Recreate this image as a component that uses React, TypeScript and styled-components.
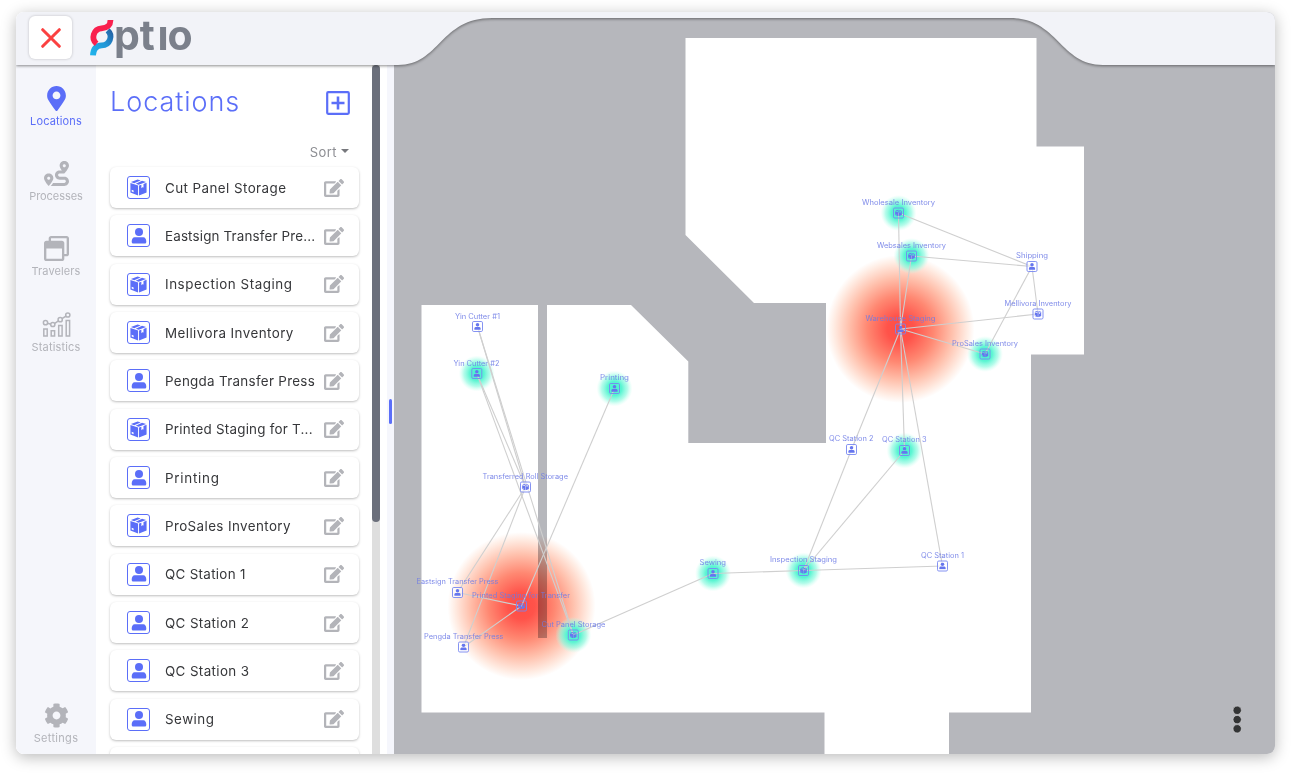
import React from "react";
import styled, { createGlobalStyle } from "styled-components";
import { FaMapMarkerAlt, FaRoute, FaRegWindowRestore, FaCog, FaEdit } from "react-icons/fa";

const GlobalStyle = createGlobalStyle`
  * { box-sizing: border-box; }
  body { margin: 0; background: #fff; font-family: Inter, "Open Sans", sans-serif; }
  button { font: inherit; border: 0; padding: 0; background: none; }
`;

const BLUE = "#5b6ef8";
const MUTED = "#b3b4ba";

const Page = styled.div`
  width: 1291px;
  height: 774px;
  padding: 12px 16px 20px;
  overflow: hidden;
`;

const Window = styled.div`
  position: relative;
  width: 1259px;
  height: 742px;
  padding-top: 53px;
  display: flex;
  border-radius: 8px;
  overflow: hidden;
  background: #fff;
`;

const Shadow = styled.div`
  border-radius: 8px;
  box-shadow: 0 3px 15px rgba(0, 0, 0, 0.28);
`;

/* The header floats over the map, so its curved edge can reveal it. */
const Header = styled.header`
  position: absolute;
  inset: 0 0 auto 0;
  height: 60px;
`;

const HeaderShape = styled.svg`
  display: block;
  filter: drop-shadow(0 1px 1.5px rgba(0, 0, 0, 0.45));
`;

const HeaderContent = styled.div`
  position: absolute;
  inset: 0;
  display: flex;
  align-items: flex-start;
  padding: 4px 0 0 13px;
  gap: 16px;
`;

const CloseButton = styled.button`
  width: 43px;
  height: 43px;
  display: grid;
  place-items: center;
  background: #fff;
  border-radius: 6px;
  box-shadow: 0 0 3px rgba(0, 0, 0, 0.22);
`;

const Nav = styled.nav`
  width: 80px;
  flex: none;
  display: flex;
  flex-direction: column;
  background: #f5f6fb;
  padding: 21px 0 9px;
  gap: 33.2px;
`;

const NavItem = styled.a<{ $active?: boolean; $last?: boolean }>`
  display: flex;
  flex-direction: column;
  align-items: center;
  gap: 3px;
  height: 42px;
  margin-top: ${(p) => (p.$last ? "auto" : "0")};
  color: ${(p) => (p.$active ? BLUE : MUTED)};
  svg { flex: none; }
`;

const NavLabel = styled.span<{ $spacing?: number }>`
  font-size: 11px;
  line-height: 15px;
  letter-spacing: ${(p) => p.$spacing ?? 0}px;
  white-space: nowrap;
`;

const Panel = styled.section`
  width: 276px;
  flex: none;
  overflow: hidden;
  padding: 19px 13px 0 14px;
`;

const PanelHead = styled.div`
  display: flex;
  justify-content: space-between;
  align-items: center;
  padding: 0 9px 0 0;
  height: 36px;
  svg { margin-top: 2px; }
`;

const Title = styled.h1`
  margin: 0;
  font-size: 27px;
  font-weight: 300;
  letter-spacing: 0.95px;
  line-height: 34px;
  color: ${BLUE};
`;

const SortButton = styled.button`
  display: flex;
  align-items: center;
  gap: 4px;
  margin: 22px 10px 0 auto;
  height: 20px;
  font-size: 13px;
  color: #8d8e93;
  letter-spacing: 0.45px;
`;

const Caret = styled.span`
  border: 4px solid transparent;
  border-top-color: #77787d;
  border-bottom: 0;
  margin-bottom: 2px;
`;

const List = styled.div`
  display: flex;
  flex-direction: column;
  gap: 7.35px;
  padding-top: 5px;
`;

const Card = styled.div`
  flex: none;
  height: 41px;
  display: flex;
  align-items: center;
  padding: 0 15px 0 17px;
  border-radius: 6px;
  background: #fff;
  box-shadow: 0 1px 2.5px rgba(0, 0, 0, 0.26);
`;

const KindBox = styled.span`
  width: 23px;
  height: 23px;
  display: grid;
  place-items: center;
  border: 1px solid ${BLUE};
  border-radius: 3px;
  color: ${BLUE};
`;

const CardName = styled.span<{ $spacing: number }>`
  flex: 1;
  margin-left: 15px;
  font-size: 13.4px;
  letter-spacing: ${(p) => p.$spacing}px;
  color: #36373a;
  white-space: nowrap;
`;

const Track = styled.div`
  width: 8px;
  flex: none;
  background: #dedede;
`;

const Thumb = styled.div`
  height: 457px;
  border-radius: 4px;
  background: #6b6f7b;
`;

const Splitter = styled.div`
  width: 7px;
  margin-left: 7px;
  flex: none;
  display: flex;
  align-items: flex-start;
  padding: 334px 0 0 1.5px;
  background: #f5f6fc;
`;

const Grip = styled.div`
  width: 3.5px;
  height: 25px;
  border-radius: 2px;
  background: ${BLUE};
`;

const MapArea = styled.main`
  flex: 1;
  margin-top: -53px;
  background: #b6b7bc;
`;

const MapDrawing = styled.svg`
  display: block;
  text { font-family: Inter, "Open Sans", sans-serif; }
`;

const LogoDrawing = styled.svg`
  overflow: visible;
`;

const Person = ({ size = 16 }: { size?: number }) => (
  <svg width={size} height={size} viewBox="0 0 16 16" fill="currentColor">
    <circle cx="8" cy="4.1" r="4" />
    <path d="M3.6 9.2h8.8c1.600 0 2.900 1.900 2.900 4.300 0 1.400-.5 2.100-1.500 2.100H2.200c-1 0-1.500-.7-1.500-2.100 0-2.400 1.300-4.300 2.900-4.300z" />
  </svg>
);

const Carton = ({ size = 16 }: { size?: number }) => (
  <svg width={size} height={size} viewBox="0 0 16 16" fill="currentColor">
    <path d="M7.200.5L10 1.400 3.900 3.900.9 2.900zM11.300 1.700l3.900 1.200-7 2.500-2.800-.9z" />
    <path d="M.4 3.800l7.200 2.300v9.500L.4 12.700zM1.600 10.200v1.500l1.800.7v-1.500z" fillRule="evenodd" />
    <path d="M8.500 6.100l2.200-.8v3.300l1-.9 1 .2V4.600l2.900-1v9L8.500 15.600z" />
  </svg>
);

const StatsIcon = () => (
  <svg width="29" height="25" viewBox="0 0 29 25" fill="none" stroke="currentColor" strokeWidth="1.5">
    <path d="M1.800 17h3.400v7H1.800zM9.200 18.700h3.400V24H9.200zM16.700 13.500h3.400V24h-3.400zM24.200 8.500h3.400V24h-3.400z" />
    <path d="M5.500 11.200l3.500 1M12.800 11.400l3.600-2.600M20 6.700l4.200-2.700" />
    <circle cx="3.500" cy="10.700" r="2.100" />
    <circle cx="10.800" cy="12.500" r="2.100" />
    <circle cx="18.200" cy="7.700" r="2.100" />
    <circle cx="25.800" cy="3" r="2.100" />
  </svg>
);

const Logo = () => (
  <LogoDrawing width="112" height="44" viewBox="88 16 112 44">
    <defs>
      <linearGradient id="logoBlue" x1="0" y1="1" x2="1" y2="0">
        <stop offset="0" stopColor="#21b2ea" />
        <stop offset="0.6" stopColor="#2095d6" />
        <stop offset="1" stopColor="#2565a8" />
      </linearGradient>
    </defs>
    <path d="M107.600 30.300A8.600 8.600 0 0 1 101.700 45.300C96.500 45.600 93.200 49 93 55.400" fill="none" stroke="url(#logoBlue)" strokeWidth="5.800" />
    <path d="M96.600 43.700A8.700 8.700 0 0 1 101.500 28.300C107 27.900 110.300 26 110.500 20" fill="none" stroke="#f9204e" strokeWidth="5.800" />
    <text x="113.900 139.800 157.600 167.600" y="50" fontFamily="Inter, sans-serif" fontWeight="700" fontSize="41" fill="#7b808b">ptıo</text>
  </LogoDrawing>
);

type Kind = "box" | "person";

const locations: { name: string; kind: Kind; spacing?: number }[] = [
  { name: "Cut Panel Storage", kind: "box", spacing: 0.43 },
  { name: "Eastsign Transfer Pre...", kind: "person", spacing: 0.16 },
  { name: "Inspection Staging", kind: "box", spacing: 0.55 },
  { name: "Mellivora Inventory", kind: "box", spacing: 0.43 },
  { name: "Pengda Transfer Press", kind: "person" },
  { name: "Printed Staging for T...", kind: "box", spacing: 0.24 },
  { name: "Printing", kind: "person", spacing: 0.75 },
  { name: "ProSales Inventory", kind: "box", spacing: 0.4 },
  { name: "QC Station 1", kind: "person" },
  { name: "QC Station 2", kind: "person", spacing: 0.37 },
  { name: "QC Station 3", kind: "person", spacing: 0.37 },
  { name: "Sewing", kind: "person", spacing: 0.5 },
  { name: "", kind: "person" },
];

interface MapNode {
  name: string;
  x: number;
  y: number;
  kind: Kind;
  glow?: boolean;
  hot?: boolean;
  lx: number;
  ly: number;
  w: number;
}

const nodes: MapNode[] = [
  { name: "Wholesale Inventory", x: 898.5, y: 213, kind: "box", glow: true, lx: 862, ly: 205, w: 73 },
  { name: "Websales Inventory", x: 911.5, y: 256, kind: "box", glow: true, lx: 877, ly: 247.500, w: 69 },
  { name: "Shipping", x: 1032, y: 266.500, kind: "person", lx: 1016, ly: 258, w: 32 },
  { name: "Mellivora Inventory", x: 1038, y: 314, kind: "box", lx: 1004.500, ly: 306, w: 67 },
  { name: "Warehouse Staging", x: 900.500, y: 329, kind: "person", hot: true, lx: 865.500, ly: 321, w: 70 },
  { name: "ProSales Inventory", x: 985, y: 354, kind: "box", glow: true, lx: 952, ly: 346, w: 66 },
  { name: "Yin Cutter #1", x: 477.5, y: 326.500, kind: "person", lx: 455, ly: 318.500, w: 45 },
  { name: "Yin Cutter #2", x: 476.800, y: 373.500, kind: "person", glow: true, lx: 453.500, ly: 365.500, w: 46 },
  { name: "Printing", x: 614.500, y: 388.500, kind: "person", glow: true, lx: 600, ly: 380.200, w: 29 },
  { name: "Transferred Roll Storage", x: 525.500, y: 487, kind: "box", lx: 482.500, ly: 479, w: 85.500 },
  { name: "Eastsign Transfer Press", x: 457.500, y: 592.500, kind: "person", lx: 416.500, ly: 584, w: 82 },
  { name: "Printed Staging for Transfer", x: 521.500, y: 606, kind: "box", hot: true, lx: 472, ly: 598, w: 98 },
  { name: "Pengda Transfer Press", x: 463.500, y: 647, kind: "person", lx: 424, ly: 639, w: 79.500 },
  { name: "Cut Panel Storage", x: 573.300, y: 635, kind: "box", glow: true, lx: 541.500, ly: 627, w: 64 },
  { name: "Sewing", x: 713, y: 573.500, kind: "person", glow: true, lx: 699.500, ly: 565, w: 26.500 },
  { name: "Inspection Staging", x: 803.500, y: 570.500, kind: "box", glow: true, lx: 770, ly: 562.300, w: 67 },
  { name: "QC Station 2", x: 851.500, y: 449.500, kind: "person", lx: 829, ly: 441, w: 44.500 },
  { name: "QC Station 3", x: 904.500, y: 450.500, kind: "person", glow: true, lx: 882, ly: 442, w: 44.500 },
  { name: "QC Station 1", x: 942.500, y: 566, kind: "person", lx: 921, ly: 558, w: 43 },
];

const links: [number, number][] = [
  [0, 2], [1, 2], [0, 4], [1, 4], [4, 3], [4, 5], [2, 3], [2, 5], [4, 16], [4, 17], [4, 18],
  [16, 15], [17, 15], [15, 18], [14, 15], [13, 14], [6, 9], [7, 9], [7, 13], [6, 13], [9, 10],
  [9, 12], [10, 11], [12, 11], [8, 11],
];

const FloorMap = () => (
  <MapDrawing width="881" height="742" viewBox="394 12 881 742">
    <defs>
      <radialGradient id="hot">
        <stop offset="0" stopColor="#ff4c44" />
        <stop offset="0.18" stopColor="#ff534a" />
        <stop offset="0.45" stopColor="#ff8872" />
        <stop offset="0.7" stopColor="#ffc1ad" />
        <stop offset="0.9" stopColor="#ffece3" />
        <stop offset="1" stopColor="#ffffff" />
      </radialGradient>
      <radialGradient id="glow">
        <stop offset="0" stopColor="#42f3ce" />
        <stop offset="0.4" stopColor="#5bf5d2" />
        <stop offset="0.72" stopColor="#8bfadf" stopOpacity="0.650" />
        <stop offset="1" stopColor="#c0ffee" stopOpacity="0" />
      </radialGradient>
    </defs>
    <path
      fill="#fff"
      d="M685.500 38H1036.500V146.500H1084V354.500H1031V712.500H949V754H824.500V712.500H421.500V305H631L688.300 361.500V443H826V303H754L685.500 235Z"
    />
    <path fill="#b6b7bc" d="M538 304h9v334h-9z" />
    {nodes.filter((n) => n.hot).map((n) => (
      <circle key={n.name} cx={n.x} cy={n.y} r="74" fill="url(#hot)" style={{ mixBlendMode: "multiply" }} />
    ))}
    {nodes.filter((n) => n.glow).map((n) => (
      <circle key={n.name} cx={n.x} cy={n.y} r="18" fill="url(#glow)" />
    ))}
    {links.map(([a, b]) => (
      <line key={`${a}-${b}`} x1={nodes[a].x} y1={nodes[a].y} x2={nodes[b].x} y2={nodes[b].y} stroke="#cfcfcf" strokeWidth="1.100" />
    ))}
    {nodes.map((n) => (
      <g key={n.name} color="#6676ee">
        <rect x={n.x - 5} y={n.y - 5} width="10" height="10" rx="1.300" fill={n.glow || n.hot ? "none" : "#fff"} fillOpacity="0.600" stroke="#7787f0" strokeWidth="0.900" />
        <g transform={`translate(${n.x - 3.5} ${n.y - 3.5})`}>
          {n.kind === "box" ? <Carton size={7} /> : <Person size={7} />}
        </g>
        <text x={n.lx} y={n.ly} fontSize="7" textLength={n.w} lengthAdjust="spacingAndGlyphs" fill="#6d7be6" fillOpacity="0.880">
          {n.name}
        </text>
      </g>
    ))}
    <g fill="#333435" stroke="#d0d0d3" strokeWidth="0.700">
      <circle cx="1237.200" cy="710.300" r="4.200" />
      <circle cx="1237.200" cy="719.600" r="4.200" />
      <circle cx="1237.200" cy="728.800" r="4.200" />
    </g>
  </MapDrawing>
);

export default function App() {
  return (
    <Page>
      <GlobalStyle />
      <Shadow>
        <Window>
          <Nav>
            <NavItem $active>
              <FaMapMarkerAlt size={25} />
              <NavLabel $spacing={0.15}>Locations</NavLabel>
            </NavItem>
            <NavItem>
              <FaRoute size={25} />
              <NavLabel $spacing={-0.05}>Processes</NavLabel>
            </NavItem>
            <NavItem>
              <FaRegWindowRestore size={25} />
              <NavLabel $spacing={0.1}>Travelers</NavLabel>
            </NavItem>
            <NavItem>
              <StatsIcon />
              <NavLabel $spacing={0.15}>Statistics</NavLabel>
            </NavItem>
            <NavItem $last>
              <FaCog size={25} />
              <NavLabel $spacing={0.3}>Settings</NavLabel>
            </NavItem>
          </Nav>
          <Panel>
            <PanelHead>
              <Title>Locations</Title>
              <svg width="24" height="24" viewBox="0 0 24 24" fill="none" stroke={BLUE} strokeWidth="2.200">
                <rect x="1.200" y="1.200" width="21.600" height="21.600" rx="1" />
                <path d="M12 5.500v13M5.500 12h13" strokeWidth="2.600" />
              </svg>
            </PanelHead>
            <SortButton>
              Sort
              <Caret />
            </SortButton>
            <List>
              {locations.map((l, i) => (
                <Card key={i}>
                  <KindBox>{l.kind === "box" ? <Carton size={17} /> : <Person size={16} />}</KindBox>
                  <CardName $spacing={l.spacing ?? 0.3}>{l.name}</CardName>
                  <FaEdit size={20} color="#b3b4b9" />
                </Card>
              ))}
            </List>
          </Panel>
          <Track>
            <Thumb />
          </Track>
          <Splitter>
            <Grip />
          </Splitter>
          <MapArea>
            <FloorMap />
          </MapArea>
          <Header>
            <HeaderShape width="1259" height="60" viewBox="16 12 1259 60">
              <path
                fill="#f2f3f8"
                d="M10 5H1285V65H1103C1060 65 1058 18 1010 18H492C440 18 440 65 398 65H10Z"
              />
            </HeaderShape>
            <HeaderContent>
              <CloseButton aria-label="Close">
                <svg width="20" height="20" viewBox="0 0 20 20" stroke="#fb4141" strokeWidth="3" strokeLinecap="round">
                  <path d="M1.700 1.700l16.600 16.600M18.300 1.700L1.700 18.300" />
                </svg>
              </CloseButton>
              <Logo />
            </HeaderContent>
          </Header>
        </Window>
      </Shadow>
    </Page>
  );
}
